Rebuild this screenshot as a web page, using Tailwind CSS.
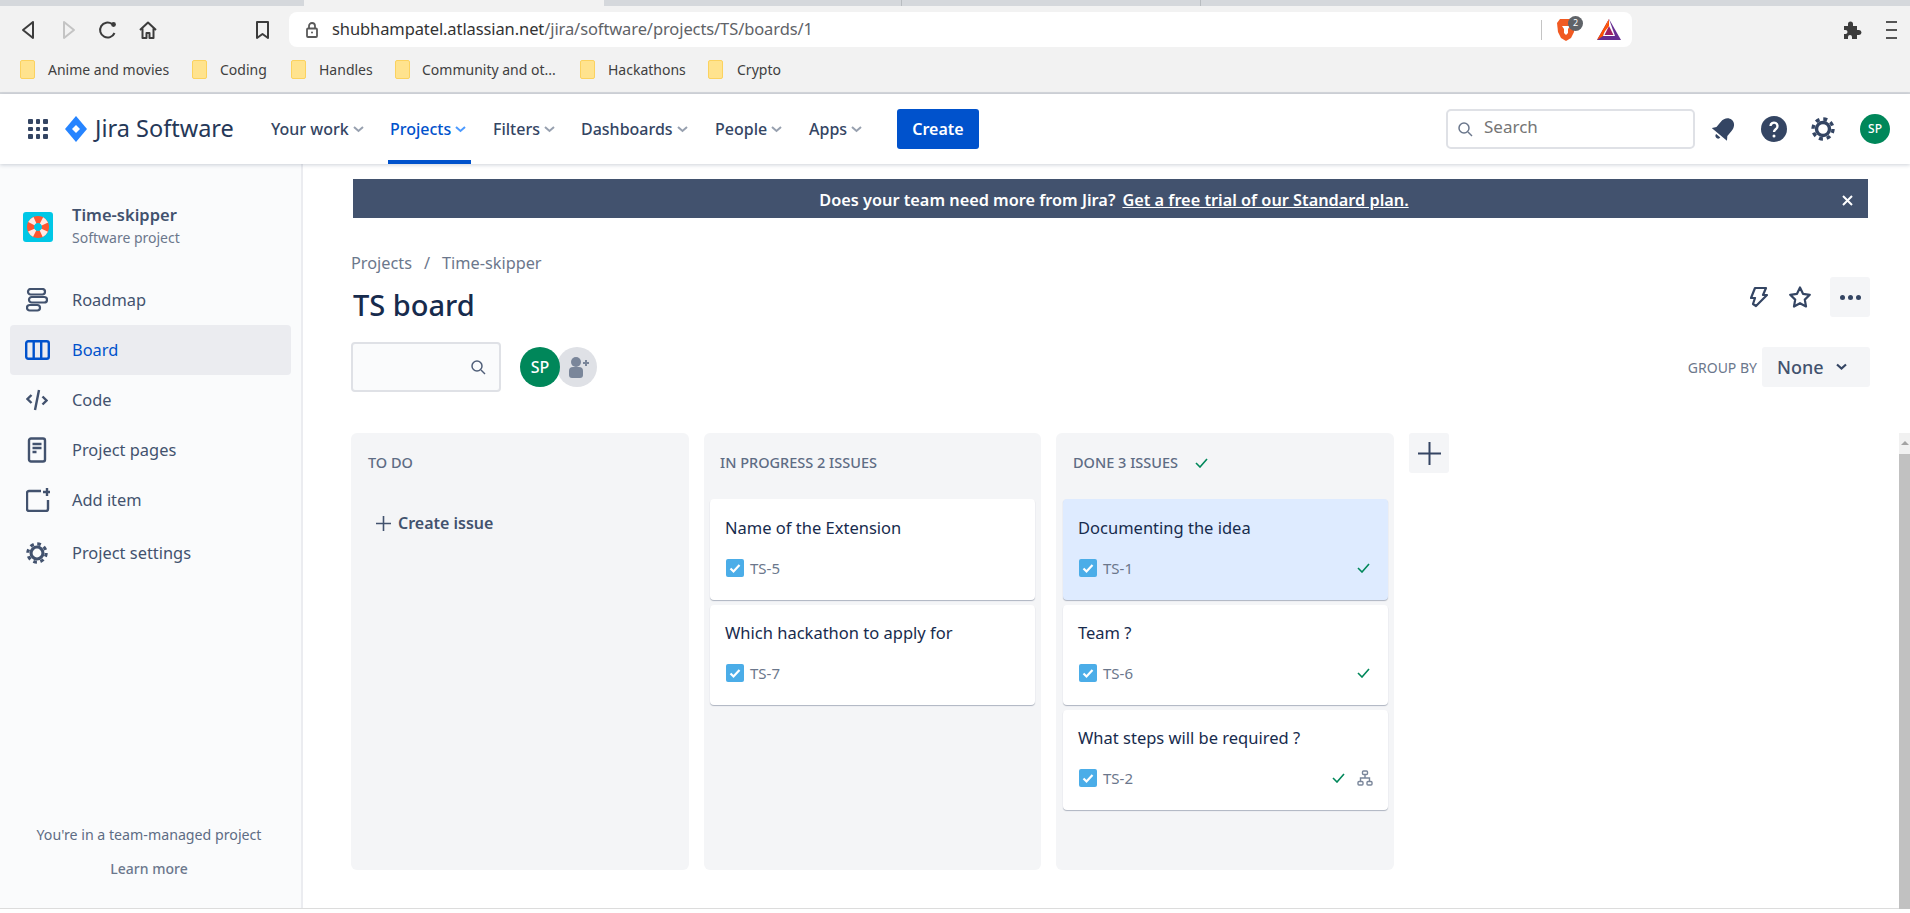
<!DOCTYPE html>
<html>
<head>
<meta charset="utf-8">
<title>TS board</title>
<script src="https://cdn.jsdelivr.net/npm/@tailwindcss/browser@4"></script>
</head>
<body class="relative h-[913px] w-[1910px] overflow-hidden bg-white font-['Noto_Sans',sans-serif] text-[#42526e]">

<!-- tab strip -->
<div class="flex h-[6px] bg-[#d5d8dc]">
  <div class="w-[304px]"></div>
  <div class="w-[300px] bg-[#f2f2f2]"></div>
  <div class="w-[297px]"></div>
  <div class="w-px bg-[#b8bcc0]"></div>
  <div class="w-[298px]"></div>
  <div class="w-px bg-[#b8bcc0]"></div>
</div>

<!-- browser toolbar -->
<div class="flex h-[41px] items-start bg-[#f2f2f2] text-[#444]">
  <div class="mt-[14px] flex w-[289px] items-center">
    <svg class="ml-[20px] h-[20px] w-[16px]" viewBox="0 0 16 20" fill="none" stroke="#3c3c3c" stroke-width="2" stroke-linejoin="round"><path d="M13 2 3 10l10 8z"/></svg>
    <svg class="ml-[25px] h-[20px] w-[16px]" viewBox="0 0 16 20" fill="none" stroke="#c4c4c4" stroke-width="2" stroke-linejoin="round"><path d="M3 2l10 8-10 8z"/></svg>
    <svg class="ml-[21px] h-[20px] w-[20px]" viewBox="0 0 20 20" fill="none" stroke="#3c3c3c" stroke-width="2"><path d="M16.5 13A7.5 7.5 0 1 1 14 4"/><circle cx="15.5" cy="4.5" r="2.4" fill="#3c3c3c" stroke="none"/></svg>
    <svg class="ml-[20px] h-[20px] w-[20px]" viewBox="0 0 20 20" fill="none" stroke="#3c3c3c" stroke-width="2" stroke-linejoin="round"><path d="M2 10l8-7.5L18 10M4.5 8.5V18h4v-5h3v5h4V8.5"/></svg>
    <svg class="ml-[97px] h-[20px] w-[15px]" viewBox="0 0 15 20" fill="none" stroke="#3c3c3c" stroke-width="2" stroke-linejoin="round"><path d="M2 2h11v16l-5.500-4L2 18z"/></svg>
  </div>
  <div class="mt-[6px] flex h-[35px] w-[1343px] items-center rounded-[8px] bg-white">
    <svg class="ml-[16px] h-[16px] w-[14px]" viewBox="0 0 14 16" fill="none" stroke="#5a5a5a" stroke-width="1.800"><rect x="2" y="6.500" width="10" height="8.500" rx="1"/><path d="M4 6.500V4a3 3 0 0 1 6 0v2.500"/><circle cx="7" cy="10.500" r="1" fill="#5a5a5a" stroke="none"/></svg>
    <span class="ml-[13px] text-[16.5px] tracking-[-0.1px] text-[#5f6368]"><span class="text-[#333]">shubhampatel.atlassian.net</span>/jira/software/projects/TS/boards/1</span>
    <div class="ml-auto mr-[11px] flex items-center">
      <div class="h-[20px] w-px bg-[#c4c4c4]"></div>
      <div class="relative ml-[14px] h-[24px] w-[22px]">
        <svg class="h-[24px] w-[20px]" viewBox="0 0 20 24"><path d="M4 1h12l3 4-1 9-3 6-5 3-5-3-3-6-1-9z" fill="#f15a22"/><path d="M6 8h8l-2 3v4l-2 2-2-2v-4z" fill="#fff"/></svg>
        <span class="absolute left-[12px] top-[-2px] flex h-[15px] w-[15px] items-center justify-center rounded-full bg-[#5f6368] text-[9px] text-white">2</span>
      </div>
      <svg class="ml-[19px] h-[21px] w-[24px]" viewBox="0 0 24 21"><path d="M12 0 24 21H0z" fill="#662d91"/><path d="M12 0 0 21l6-4z" fill="#ff5000"/><path d="M12 0l-6 17h12z" fill="#fff"/><path d="M12 7 7.500 16h9z" fill="#9e1f63"/><path d="M12 0 6.500 14 12 7z" fill="#ff5000"/></svg>
    </div>
  </div>
  <svg class="ml-[211px] mt-[15px] h-[18px] w-[19px]" viewBox="0 0 19 18" fill="#3c3c3c"><path d="M1 5h4V3a2.500 2.500 0 0 1 5 0v2h4v4h2a2.500 2.500 0 0 1 0 5h-2v4H9v-2a2 2 0 0 0-4 0v2H1v-5h1.500a2 2 0 0 0 0-4H1z"/></svg>
  <div class="ml-[24px] mt-[15px] flex h-[18px] w-[11px] flex-col justify-between">
    <div class="h-[2px] bg-[#555]"></div><div class="h-[2px] bg-[#555]"></div><div class="h-[2px] bg-[#555]"></div>
  </div>
</div>

<!-- bookmarks -->
<div class="flex h-[47px] items-center border-b-2 border-[#d5d8dc] bg-[#f2f2f2] text-[14px] text-[#404040]">
  <div class="ml-[20px] flex w-[172px] items-center gap-[13px]"><span class="h-[19px] w-[15px] rounded-[2px] border border-[#fbd25f] bg-[#ffe38e]"></span><span>Anime and movies</span></div>
  <div class="flex w-[99px] items-center gap-[13px]"><span class="h-[19px] w-[15px] rounded-[2px] border border-[#fbd25f] bg-[#ffe38e]"></span><span>Coding</span></div>
  <div class="flex w-[104px] items-center gap-[13px]"><span class="h-[19px] w-[15px] rounded-[2px] border border-[#fbd25f] bg-[#ffe38e]"></span><span>Handles</span></div>
  <div class="flex w-[185px] items-center gap-[12px]"><span class="h-[19px] w-[15px] rounded-[2px] border border-[#fbd25f] bg-[#ffe38e]"></span><span>Community and ot...</span></div>
  <div class="flex w-[128px] items-center gap-[13px]"><span class="h-[19px] w-[15px] rounded-[2px] border border-[#fbd25f] bg-[#ffe38e]"></span><span>Hackathons</span></div>
  <div class="flex items-center gap-[14px]"><span class="h-[19px] w-[15px] rounded-[2px] border border-[#fbd25f] bg-[#ffe38e]"></span><span>Crypto</span></div>
</div>

<!-- jira nav -->
<header class="relative z-10 flex h-[70px] items-center bg-white shadow-[0_1px_4px_rgba(9,30,66,0.2)]">
  <div class="ml-[28px] grid h-[20px] w-[20px] grid-cols-3 gap-[3px]">
    <i class="rounded-[1px] bg-[#344563]"></i><i class="rounded-[1px] bg-[#344563]"></i><i class="rounded-[1px] bg-[#344563]"></i>
    <i class="rounded-[1px] bg-[#344563]"></i><i class="rounded-[1px] bg-[#344563]"></i><i class="rounded-[1px] bg-[#344563]"></i>
    <i class="rounded-[1px] bg-[#344563]"></i><i class="rounded-[1px] bg-[#344563]"></i><i class="rounded-[1px] bg-[#344563]"></i>
  </div>
  <svg class="ml-[17px] h-[26px] w-[22px]" viewBox="0 0 22 26"><path d="M11 0 22 13 11 26 0 13z" fill="#2684ff"/><path d="M11 9l4 4-4 4-4-4z" fill="#fff"/></svg>
  <span class="ml-[8px] w-[176px] text-[23.5px] leading-none text-[#253858]">Jira Software</span>
  <nav class="flex h-[70px] items-center text-[16px] font-medium text-[#344563]">
    <div class="flex w-[119px] items-center">Your work<svg class="ml-[4px] h-[8px] w-[11px]" viewBox="0 0 11 8" fill="none" stroke="#97a0af" stroke-width="2"><path d="M1 2l4.500 4L10 2"/></svg></div>
    <div class="relative flex h-full w-[103px] items-center text-[#0052cc]">Projects<svg class="ml-[4px] h-[8px] w-[11px]" viewBox="0 0 11 8" fill="none" stroke="#4c9aff" stroke-width="2"><path d="M1 2l4.500 4L10 2"/></svg><span class="absolute bottom-0 left-[-2px] h-[4px] w-[83px] bg-[#0052cc]"></span></div>
    <div class="flex w-[88px] items-center">Filters<svg class="ml-[4px] h-[8px] w-[11px]" viewBox="0 0 11 8" fill="none" stroke="#97a0af" stroke-width="2"><path d="M1 2l4.500 4L10 2"/></svg></div>
    <div class="flex w-[134px] items-center">Dashboards<svg class="ml-[4px] h-[8px] w-[11px]" viewBox="0 0 11 8" fill="none" stroke="#97a0af" stroke-width="2"><path d="M1 2l4.500 4L10 2"/></svg></div>
    <div class="flex w-[94px] items-center">People<svg class="ml-[4px] h-[8px] w-[11px]" viewBox="0 0 11 8" fill="none" stroke="#97a0af" stroke-width="2"><path d="M1 2l4.500 4L10 2"/></svg></div>
    <div class="flex w-[88px] items-center">Apps<svg class="ml-[4px] h-[8px] w-[11px]" viewBox="0 0 11 8" fill="none" stroke="#97a0af" stroke-width="2"><path d="M1 2l4.500 4L10 2"/></svg></div>
    <button class="h-[40px] w-[82px] rounded-[3px] bg-[#0052cc] font-semibold text-white">Create</button>
  </nav>
  <div class="ml-auto flex items-center">
    <div class="flex h-[40px] w-[249px] items-center rounded-[5px] border-2 border-[#dfe1e6] bg-white pl-[9px]">
      <svg class="h-[16px] w-[16px]" viewBox="0 0 16 16" fill="none" stroke="#6b778c" stroke-width="1.500"><circle cx="7" cy="7" r="5"/><path d="M11 11l4 4"/></svg>
      <span class="ml-[11px] mt-[-4px] text-[17px] text-[#757575]">Search</span>
    </div>
    <svg class="ml-[17px] h-[24px] w-[24px]" viewBox="0 0 22 22" fill="#344563"><g transform="rotate(40 11 11)"><path d="M11 0C7 0 4.500 3.500 4.500 8v6L2 17.500h18L17.500 14V8C17.500 3.500 15 0 11 0z"/><path d="M8.500 19.200a2.500 2.500 0 0 0 5 0z"/></g></svg>
    <svg class="ml-[25px] h-[26px] w-[26px]" viewBox="0 0 26 26"><circle cx="13" cy="13" r="13" fill="#344563"/><path d="M9.500 10a3.500 3.500 0 1 1 5.500 3c-1.300 1-2 1.500-2 3" fill="none" stroke="#fff" stroke-width="2.400"/><circle cx="13" cy="20" r="1.500" fill="#fff"/></svg>
    <svg class="ml-[24px] h-[24px] w-[24px]" viewBox="0 0 24 24" fill="none" stroke="#344563"><circle cx="12" cy="12" r="6.500" stroke-width="3.400"/><circle cx="12" cy="12" r="10" stroke-width="3.400" stroke-dasharray="4 3.850"/></svg>
    <span class="ml-[25px] mr-[20px] flex h-[30px] w-[30px] items-center justify-center rounded-full bg-[#00875a] text-[12px] font-medium text-white">SP</span>
  </div>
</header>

<div class="flex h-[745px] border-b border-[#dcdcdc]">
  <!-- sidebar -->
  <aside class="flex w-[303px] shrink-0 flex-col border-r-2 border-[#ebecf0] bg-[#fafbfc] pb-[29px]">
    <div class="mx-[23px] mt-[40px] flex items-center gap-[19px]">
      <svg class="h-[30px] w-[30px]" viewBox="0 0 30 30"><rect width="30" height="30" rx="3" fill="#00c7e6"/><circle cx="15" cy="15" r="7.500" fill="none" stroke="#ff5630" stroke-width="7"/><circle cx="15" cy="15" r="7.500" fill="none" stroke="#ffebe6" stroke-width="7" stroke-dasharray="5 6.780" stroke-dashoffset="-3.400"/></svg>
      <div>
        <div class="text-[16.5px] font-semibold leading-[22px] text-[#42526e]">Time-skipper</div>
        <div class="text-[14px] leading-[24px] text-[#6b778c]">Software project</div>
      </div>
    </div>
    <nav class="mx-[10px] mt-[25px] flex flex-col text-[16.4px]">
      <div class="flex h-[50px] items-center px-[16px]">
        <svg class="h-[24px] w-[22px]" viewBox="0 0 22 24" fill="none" stroke="#42526e" stroke-width="2.200"><rect x="2" y="1" width="17" height="5.500" rx="2.700"/><rect x="3" y="9" width="18" height="5.500" rx="2.700" /><rect x="1" y="17" width="13" height="5.500" rx="2.700"/></svg>
        <span class="ml-[24px]">Roadmap</span>
      </div>
      <div class="flex h-[50px] items-center rounded-[4px] bg-[#ebecf0] px-[15px] text-[#0052cc]">
        <svg class="h-[20px] w-[25px]" viewBox="0 0 25 20" fill="none" stroke="#0052cc" stroke-width="2.400"><rect x="1.200" y="1.200" width="22.600" height="17.600" rx="2"/><path d="M8.700 1v18M16.200 1v18"/></svg>
        <span class="ml-[22px]">Board</span>
      </div>
      <div class="flex h-[50px] items-center px-[16px]">
        <svg class="h-[22px] w-[22px]" viewBox="0 0 22 22" fill="none" stroke="#42526e" stroke-width="2.400"><path d="M5.500 6 1.500 10l4 4M16.500 7.500l4 4-4 4M13 1 9 21"/></svg>
        <span class="ml-[24px]">Code</span>
      </div>
      <div class="flex h-[50px] items-center px-[16px]">
        <svg class="h-[26px] w-[22px]" viewBox="0 0 22 26" fill="none" stroke="#42526e" stroke-width="2.400"><rect x="3" y="1.500" width="16" height="23" rx="2"/><path d="M6.500 7h9M6.500 11h9M6.500 15h4"/></svg>
        <span class="ml-[24px]">Project pages</span>
      </div>
      <div class="flex h-[50px] items-center px-[16px]">
        <svg class="h-[24px] w-[24px]" viewBox="0 0 24 24" fill="none" stroke="#42526e" stroke-width="2.400"><path d="M22 12v9a2 2 0 0 1-2 2H3a2 2 0 0 1-2-2V5a2 2 0 0 1 2-2h12M21 0v8M17 4h8"/></svg>
        <span class="ml-[22px]">Add item</span>
      </div>
      <div class="mt-[3px] flex h-[50px] items-center px-[16px]">
        <svg class="h-[24px] w-[22px]" viewBox="0 0 24 24" fill="none" stroke="#42526e"><circle cx="12" cy="12" r="6.500" stroke-width="3.400"/><circle cx="12" cy="12" r="10" stroke-width="3.400" stroke-dasharray="4 3.850"/></svg>
        <span class="ml-[24px]">Project settings</span>
      </div>
    </nav>
    <div class="mt-auto pr-[3px] text-center">
      <div class="text-[14.2px] leading-[20px] text-[#5e6c84]">You're in a team-managed project</div>
      <div class="mt-[14px] text-[14px] font-medium leading-[20px] text-[#6b778c]">Learn more</div>
    </div>
  </aside>

  <!-- board -->
  <main class="flex min-w-0 flex-1 flex-col pl-[48px] pr-[40px]">
    <div class="ml-[2px] mr-[2px] mt-[15px] flex h-[39px] items-center bg-[#42526e] pt-[4px] text-white">
      <div class="flex-1 pl-[33px] text-center text-[16.3px] font-semibold">Does your team need more from Jira?<span class="ml-[7px] underline">Get a free trial of our Standard plan.</span></div>
      <svg class="mr-[15px] h-[11px] w-[11px]" viewBox="0 0 11 11" fill="none" stroke="#fff" stroke-width="2"><path d="M1 1l9 9M10 1l-9 9"/></svg>
    </div>
    <div class="mt-[34px] flex h-[22px] items-center text-[16.3px] text-[#6b778c]">Projects<span class="mx-[12px]">/</span>Time-skipper</div>
    <div class="mt-[1px] flex h-[60px] items-center justify-between">
      <h1 class="ml-[2px] text-[29px] font-medium text-[#172b4d]">TS board</h1>
      <div class="mb-[16px] flex items-center">
        <svg class="h-[22px] w-[18px]" viewBox="0 0 18 22" fill="none" stroke="#344563" stroke-width="2.200" stroke-linejoin="round"><path d="M5 2h11l-3 7h4L6 20 3 18l2-6H1z"/></svg>
        <svg class="ml-[21px] h-[22px] w-[22px]" viewBox="0 0 22 22" fill="none" stroke="#344563" stroke-width="2.200" stroke-linejoin="round"><path d="M11 1.500l3 6.300 6.800 1-5 4.800 1.200 6.900-6-3.300-6 3.300 1.200-6.900-5-4.800 6.800-1z"/></svg>
        <div class="ml-[19px] flex h-[40px] w-[40px] items-center justify-center gap-[3px] rounded-[3px] bg-[#f4f5f7]"><i class="h-[5px] w-[5px] rounded-full bg-[#344563]"></i><i class="h-[5px] w-[5px] rounded-full bg-[#344563]"></i><i class="h-[5px] w-[5px] rounded-full bg-[#344563]"></i></div>
      </div>
    </div>
    <div class="mt-[7px] flex h-[50px] items-center">
      <div class="flex h-[50px] w-[150px] items-center justify-end rounded-[4px] border-2 border-[#dfe1e6] bg-[#fafbfc] pr-[13px]">
        <svg class="h-[16px] w-[16px]" viewBox="0 0 16 16" fill="none" stroke="#505f79" stroke-width="1.500"><circle cx="7" cy="7" r="5"/><path d="M11 11l4 4"/></svg>
      </div>
      <span class="relative z-10 ml-[19px] flex h-[40px] w-[40px] items-center justify-center rounded-full bg-[#00875a] text-[16px] font-medium text-white">SP</span>
      <span class="ml-[-3px] flex h-[40px] w-[40px] items-center justify-center rounded-full bg-[#dfe1e6]">
        <svg class="ml-[3px] h-[24px] w-[24px]" viewBox="0 0 24 24" fill="#7a869a"><circle cx="9" cy="7" r="5"/><path d="M2 16a4 4 0 0 1 4-4h6a4 4 0 0 1 4 4v4a3 3 0 0 1-3 3H5a3 3 0 0 1-3-3z"/><path d="M19 5v6M16 8h6" stroke="#7a869a" stroke-width="2"/></svg>
      </span>
      <span class="ml-auto text-[14px] text-[#6b778c]">GROUP BY</span>
      <div class="ml-[5px] flex h-[40px] w-[108px] items-center rounded-[3px] bg-[#f4f5f7] pl-[15px] text-[18px] font-medium text-[#42526e]">None<svg class="ml-[12px] h-[8px] w-[11px]" viewBox="0 0 11 8" fill="none" stroke="#344563" stroke-width="2.200"><path d="M1 1.500l4.500 4 4.500-4"/></svg></div>
    </div>

    <div class="mt-[41px] flex items-start gap-[15px]">
      <section class="h-[437px] w-[338px] rounded-[6px] bg-[#f4f5f7]">
        <div class="flex h-[60px] items-center pl-[17px] text-[14.5px] font-medium text-[#5e6c84]">TO DO</div>
        <div class="mt-[15px] flex h-[30px] items-center pl-[24px] text-[16px] font-semibold text-[#42526e]">
          <svg class="h-[17px] w-[17px]" viewBox="0 0 17 17" stroke="#42526e" stroke-width="1.600"><path d="M8.500 1v15M1 8.500h15"/></svg>
          <span class="ml-[6px]">Create issue</span>
        </div>
      </section>

      <section class="h-[437px] w-[337px] rounded-[6px] bg-[#f4f5f7]">
        <div class="flex h-[60px] items-center pl-[16px] text-[14.5px] font-medium text-[#5e6c84]">IN PROGRESS 2 ISSUES</div>
        <div class="ml-[6px] mr-[6px] mt-[6px] flex flex-col gap-[5px]">
          <article class="h-[101px] rounded-[4px] bg-white px-[15px] pt-[17px] shadow-[0_1px_1px_rgba(9,30,66,0.3)]">
            <div class="text-[16.5px] leading-[24px] text-[#172b4d]">Name of the Extension</div>
            <div class="mt-[18px] flex items-center text-[15px] leading-[20px] text-[#6b778c]"><svg class="ml-[1px] h-[18px] w-[18px]" viewBox="0 0 18 18"><rect width="18" height="18" rx="2" fill="#4bade8"/><path d="M4.500 9.500l3 3 6-6.500" fill="none" stroke="#fff" stroke-width="2.200"/></svg><span class="ml-[6px]">TS-5</span></div>
          </article>
          <article class="h-[100px] rounded-[4px] bg-white px-[15px] pt-[16px] shadow-[0_1px_1px_rgba(9,30,66,0.3)]">
            <div class="text-[16.5px] leading-[24px] text-[#172b4d]">Which hackathon to apply for</div>
            <div class="mt-[18px] flex items-center text-[15px] leading-[20px] text-[#6b778c]"><svg class="ml-[1px] h-[18px] w-[18px]" viewBox="0 0 18 18"><rect width="18" height="18" rx="2" fill="#4bade8"/><path d="M4.500 9.500l3 3 6-6.500" fill="none" stroke="#fff" stroke-width="2.200"/></svg><span class="ml-[6px]">TS-7</span></div>
          </article>
        </div>
      </section>

      <section class="h-[437px] w-[338px] rounded-[6px] bg-[#f4f5f7]">
        <div class="flex h-[60px] items-center pl-[17px] text-[14.5px] font-medium text-[#5e6c84]">DONE 3 ISSUES<svg class="ml-[17px] h-[10px] w-[13px]" viewBox="0 0 13 10" fill="none" stroke="#00875a" stroke-width="1.600"><path d="M1 5l4 4 7-8"/></svg></div>
        <div class="ml-[7px] mr-[6px] mt-[6px] flex flex-col gap-[5px]">
          <article class="h-[101px] rounded-[4px] bg-[#deebff] px-[15px] pt-[17px] shadow-[0_1px_1px_rgba(9,30,66,0.3)]">
            <div class="text-[16.5px] leading-[24px] text-[#172b4d]">Documenting the idea</div>
            <div class="mt-[18px] flex items-center text-[15px] leading-[20px] text-[#6b778c]"><svg class="ml-[1px] h-[18px] w-[18px]" viewBox="0 0 18 18"><rect width="18" height="18" rx="2" fill="#4bade8"/><path d="M4.500 9.500l3 3 6-6.500" fill="none" stroke="#fff" stroke-width="2.200"/></svg><span class="ml-[6px]">TS-1</span><svg class="ml-auto mr-[3px] h-[10px] w-[13px]" viewBox="0 0 13 10" fill="none" stroke="#00875a" stroke-width="1.600"><path d="M1 5l4 4 7-8"/></svg></div>
          </article>
          <article class="h-[100px] rounded-[4px] bg-white px-[15px] pt-[16px] shadow-[0_1px_1px_rgba(9,30,66,0.3)]">
            <div class="text-[16.5px] leading-[24px] text-[#172b4d]">Team ?</div>
            <div class="mt-[18px] flex items-center text-[15px] leading-[20px] text-[#6b778c]"><svg class="ml-[1px] h-[18px] w-[18px]" viewBox="0 0 18 18"><rect width="18" height="18" rx="2" fill="#4bade8"/><path d="M4.500 9.500l3 3 6-6.500" fill="none" stroke="#fff" stroke-width="2.200"/></svg><span class="ml-[6px]">TS-6</span><svg class="ml-auto mr-[3px] h-[10px] w-[13px]" viewBox="0 0 13 10" fill="none" stroke="#00875a" stroke-width="1.600"><path d="M1 5l4 4 7-8"/></svg></div>
          </article>
          <article class="h-[100px] rounded-[4px] bg-white px-[15px] pt-[16px] shadow-[0_1px_1px_rgba(9,30,66,0.3)]">
            <div class="text-[16.5px] leading-[24px] text-[#172b4d]">What steps will be required ?</div>
            <div class="mt-[18px] flex items-center text-[15px] leading-[20px] text-[#6b778c]"><svg class="ml-[1px] h-[18px] w-[18px]" viewBox="0 0 18 18"><rect width="18" height="18" rx="2" fill="#4bade8"/><path d="M4.500 9.500l3 3 6-6.500" fill="none" stroke="#fff" stroke-width="2.200"/></svg><span class="ml-[6px]">TS-2</span><svg class="ml-auto h-[10px] w-[13px]" viewBox="0 0 13 10" fill="none" stroke="#00875a" stroke-width="1.600"><path d="M1 5l4 4 7-8"/></svg><svg class="ml-[12px] h-[16px] w-[16px]" viewBox="0 0 16 16" fill="none" stroke="#7a869a" stroke-width="1.400"><rect x="5.500" y="1" width="5" height="3.500" rx="1"/><rect x="1" y="11.500" width="5" height="3.500" rx="1"/><rect x="10" y="11.500" width="5" height="3.500" rx="1"/><path d="M8 4.500V8M3.500 11.500V8h9v3.500"/></svg></div>
          </article>
        </div>
      </section>

      <div class="flex h-[40px] w-[40px] items-center justify-center rounded-[3px] bg-[#f4f5f7]">
        <svg class="h-[23px] w-[23px]" viewBox="0 0 23 23" stroke="#344563" stroke-width="2"><path d="M11.500 0v23M0 11.500h23"/></svg>
      </div>
    </div>
  </main>
</div>

<!-- page scrollbar -->
<div class="absolute bottom-[4px] right-0 top-[433px] flex w-[11px] flex-col bg-[#f1f1f1]">
  <div class="h-[21px]"><svg class="h-[21px] w-[11px]" viewBox="0 0 11 21"><path d="M2 12l4-4 4 4z" fill="#a3a3a3"/></svg></div>
  <div class="flex-1 bg-[#c1c1c1]"></div>
</div>
</body>
</html>
